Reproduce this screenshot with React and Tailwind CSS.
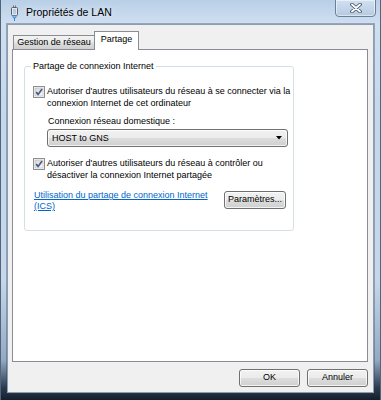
import React from "react";

function Check() {
  return (
    <svg width="12" height="12" viewBox="0 0 12 12" className="shrink-0">
      <defs>
        <linearGradient id="cbg" x1="0" y1="0" x2="1" y2="1">
          <stop offset="0" stopColor="#d4d4d4" />
          <stop offset="1" stopColor="#fbfbfb" />
        </linearGradient>
      </defs>
      <rect x="0.5" y="0.5" width="11" height="11" fill="#f6f6f6" stroke="#8e8f8f" />
      <rect x="2" y="2" width="8" height="8" fill="url(#cbg)" stroke="#bdbdbd" strokeWidth="0.6" />
      <path d="M3.1 6.1 L5.1 8.4 L9.1 3.1" fill="none" stroke="#4a5b8c" strokeWidth="1.7" />
    </svg>
  );
}

function Btn({ children, className }) {
  return (
    <div
      className={
        "flex items-center justify-center rounded-[3px] border border-[#707070] bg-[linear-gradient(180deg,#f2f2f2_0%,#ebebeb_48%,#dddddd_52%,#cfcfcf_100%)] shadow-[inset_0_0_0_1px_rgba(255,255,255,0.75)] text-[9px] text-black " +
        className
      }
    >
      {children}
    </div>
  );
}

function Plug() {
  return (
    <svg width="9" height="16" viewBox="0 0 9 16">
      <rect x="3" y="0.5" width="1" height="2" fill="#6b7280" />
      <rect x="5" y="0.5" width="1" height="2" fill="#6b7280" />
      <rect x="1.5" y="2.5" width="6" height="8" rx="1" fill="#e4e8ee" stroke="#55606e" />
      <rect x="3" y="4" width="3" height="5" fill="#c3cad4" />
      <path d="M2.5 10.5 L6.5 10.5 L5.5 13 L3.5 13 Z" fill="#7cc0ec" stroke="#3d86c2" strokeWidth="0.8" />
      <rect x="4" y="13" width="1" height="3" fill="#3d86c2" />
    </svg>
  );
}

export default function App() {
  return (
    <div className="w-[381px] h-[400px] flex flex-col overflow-hidden font-['Liberation_Sans',Arial,sans-serif] text-black bg-[linear-gradient(180deg,#b9cfe7_0%,#cfdff0_6%,#c4d7eb_30%,#c6d7ea_70%,#93aac3_90%,#2a3a4e_97%,#151f2c_100%)] border-x border-[#50647c]">
      {/* title bar */}
      <div className="h-[24px] shrink-0 flex items-start">
        <div className="flex items-center h-[25px] pl-[9px]">
          <Plug />
          <span className="ml-[7px] text-[10.5px] text-[#000] [text-shadow:0_0_6px_rgba(255,255,255,0.9)]">
            Propriétés de LAN
          </span>
        </div>
        <div className="ml-auto mr-[4px] -mt-px w-[41px] h-[18px] rounded-b-[4px] border border-[#6a7f98] bg-[linear-gradient(180deg,rgba(255,255,255,0.35),rgba(200,215,235,0.5)_50%,rgba(170,190,215,0.6))] shadow-[inset_0_0_0_1px_rgba(255,255,255,0.5)] flex items-center justify-center">
          <svg width="12" height="10" viewBox="0 0 12 10">
            <path d="M2 1.5 L10 8.5 M10 1.5 L2 8.5" stroke="#3b4b60" strokeWidth="3.6" strokeLinecap="round" />
            <path d="M2 1.5 L10 8.5 M10 1.5 L2 8.5" stroke="#ffffff" strokeWidth="1.9" strokeLinecap="round" />
          </svg>
        </div>
      </div>

      {/* client area */}
      <div className="mx-[6px] h-[369px] shrink-0 border border-[#8c9db2] bg-[#f0f0f0] flex flex-col pl-[4px] pr-[5px] pt-[6px] shadow-[0_0_0_1px_rgba(40,60,90,0.35)]">
        {/* tabs */}
        <div className="h-[18px] flex items-end">
          <div className="ml-[1px] w-[82px] h-[14px] border-x border-t border-[#898c95] bg-[linear-gradient(180deg,#f3f3f3_0%,#ebebeb_45%,#dddddd_55%,#cfcfcf_100%)] text-[9px] leading-[13px] text-center">
            Gestion de réseau
          </div>
          <div className="relative z-10 -ml-px -mb-px w-[45px] h-[19px] border-x border-t border-[#898c95] bg-white text-[9px] leading-[15px] text-center">
            Partage
          </div>
        </div>

        {/* tab panel */}
        <div className="h-[313px] border border-[#898c95] bg-white pl-[11px] pt-[16px]">
          <div className="relative w-[270px] h-[165px] border border-[#d5dfe5] rounded-[3px]">
            <span className="absolute -top-[7px] left-[6px] bg-white px-[2px] text-[9px] leading-[12px]">
              Partage de connexion Internet
            </span>

            <div className="pl-[8px] pt-[18px] flex flex-col">
              <div className="flex items-start gap-[2px]">
                <div className="mt-[1px]">
                  <Check />
                </div>
                <div className="text-[9px] leading-[12px]">
                  Autoriser d'autres utilisateurs du réseau à se connecter via la
                  <br />
                  connexion Internet de cet ordinateur
                </div>
              </div>

              <div className="mt-[6px] pl-[15px] text-[9px] leading-[12px]">
                Connexion réseau domestique :
              </div>

              <div className="mt-[2px] ml-[14px] w-[241px] h-[18px] rounded-[3px] border border-[#707070] bg-[linear-gradient(180deg,#f2f2f2_0%,#ebebeb_48%,#dddddd_52%,#cfcfcf_100%)] shadow-[inset_0_0_0_1px_rgba(255,255,255,0.75)] flex items-center pl-[4px] pr-[5px]">
                <span className="text-[9px] leading-[12px]">HOST to GNS</span>
                <svg className="ml-auto" width="6" height="4" viewBox="0 0 6 4">
                  <path d="M0 0 L6 0 L3 3.5 Z" fill="#000" />
                </svg>
              </div>

              <div className="mt-[10px] flex items-start gap-[2px]">
                <div className="mt-[1px]">
                  <Check />
                </div>
                <div className="text-[9px] leading-[12px]">
                  Autoriser d'autres utilisateurs du réseau à contrôler ou
                  <br />
                  désactiver la connexion Internet partagée
                </div>
              </div>

              <div className="mt-[9px] flex items-start pr-[7px]">
                <div className="ml-[1px] text-[9px] leading-[11px] text-[#0066cc] underline">
                  Utilisation du partage de connexion Internet
                  <br />
                  (ICS)
                </div>
                <Btn className="ml-auto mt-[1px] w-[62px] h-[18px]">Paramètres...</Btn>
              </div>
            </div>
          </div>
        </div>

        {/* bottom buttons */}
        <div className="mt-[7px] flex justify-end gap-[7px]">
          <Btn className="w-[61px] h-[18px]">OK</Btn>
          <Btn className="w-[61px] h-[18px]">Annuler</Btn>
        </div>
      </div>
    </div>
  );
}
